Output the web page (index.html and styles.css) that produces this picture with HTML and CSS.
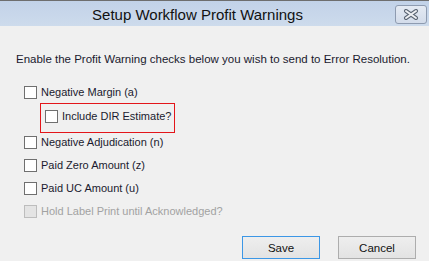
FILE: index.html
```html
<!DOCTYPE html>
<html>
<head>
<meta charset="utf-8">
<link rel="stylesheet" href="styles.css">
</head>
<body>
<div class="window">
  <div class="titlebar">
    <div class="title">Setup Workflow Profit Warnings</div>
    <div class="close">
      <svg width="16" height="11" viewBox="0 0 16 11">
        <path d="M3 2 L13 9 M13 2 L3 9" stroke="#5b6573" stroke-width="4" stroke-linecap="round"/>
        <path d="M3 2 L13 9 M13 2 L3 9" stroke="#eef0f3" stroke-width="2" stroke-linecap="round"/>
      </svg>
    </div>
  </div>
  <div class="content">
    <p class="intro">Enable the Profit Warning checks below you wish to send to Error Resolution.</p>
    <div class="checks">
      <label class="check"><span class="box"></span><span class="lbl">Negative Margin (a)</span></label>
      <div class="highlight">
        <label class="check"><span class="box"></span><span class="lbl">Include DIR Estimate?</span></label>
      </div>
      <label class="check"><span class="box"></span><span class="lbl">Negative Adjudication (n)</span></label>
      <label class="check"><span class="box"></span><span class="lbl">Paid Zero Amount (z)</span></label>
      <label class="check"><span class="box"></span><span class="lbl">Paid UC Amount (u)</span></label>
      <label class="check disabled"><span class="box"></span><span class="lbl">Hold Label Print until Acknowledged?</span></label>
    </div>
    <div class="footer">
      <button class="btn default">Save</button>
      <button class="btn">Cancel</button>
    </div>
  </div>
</div>
</body>
</html>
```

FILE: styles.css
```css
* { box-sizing: border-box; }
html, body { margin: 0; padding: 0; }
body {
  width: 429px;
  height: 261px;
  background: #f0f0f0;
  font-family: "Liberation Sans", Arial, sans-serif;
  font-size: 11px;
  color: #1a1a2e;
  overflow: hidden;
  white-space: nowrap;
}
.window { display: flex; flex-direction: column; height: 261px; }
.titlebar {
  height: 26px;
  flex: none;
  display: flex;
  align-items: center;
  border-top: 1px solid #6e6e6e;
  background: linear-gradient(#c2d2e8, #cddbec);
}
.title {
  flex: 1;
  text-align: center;
  font-size: 15px;
  color: #111;
  padding-top: 1px;
}
.close {
  width: 32px;
  height: 19px;
  margin-right: 2px;
  margin-top: 2px;
  border: 1px solid #8e9bb0;
  border-radius: 3px;
  background: linear-gradient(#e4eaf3, #d3dcea);
  display: flex;
  align-items: center;
  justify-content: center;
}
.close svg { display: block; }
.content { flex: 1; display: flex; flex-direction: column; padding: 0 13px 0 16px; }
.intro { margin: 25px 0 0; line-height: 16px; font-size: 11.5px; }
.checks { display: flex; flex-direction: column; margin-top: 19px; padding-left: 8px; }
.check { display: flex; align-items: center; height: 13px; gap: 4px; }
.check + .check { margin-top: 10px; }
.highlight + .check { margin-top: 3px; }
.box {
  width: 13px;
  height: 13px;
  border: 1px solid #6f6f6f;
  background: #fff;
  flex: none;
}
.lbl { line-height: 13px; }
.highlight {
  margin: 4px 0 0 16px;
  width: 135px;
  height: 30px;
  flex: none;
  border: 1px solid #e3151a;
  padding: 6px 0 0 4px;
}
.disabled .box { background: #e4e4e4; border-color: #bdbdbd; }
.disabled .lbl { color: #a2a2a2; }
.footer { display: flex; justify-content: flex-end; gap: 18px; margin-top: 18px; }
.btn {
  width: 78px;
  height: 23px;
  border: 1px solid #adadad;
  background: linear-gradient(#eeeeee, #e3e3e3);
  font-family: "Liberation Sans", Arial, sans-serif;
  font-size: 11.5px;
  color: #111;
  padding: 0;
}
.btn.default { border-color: #3c97e6; }
```
